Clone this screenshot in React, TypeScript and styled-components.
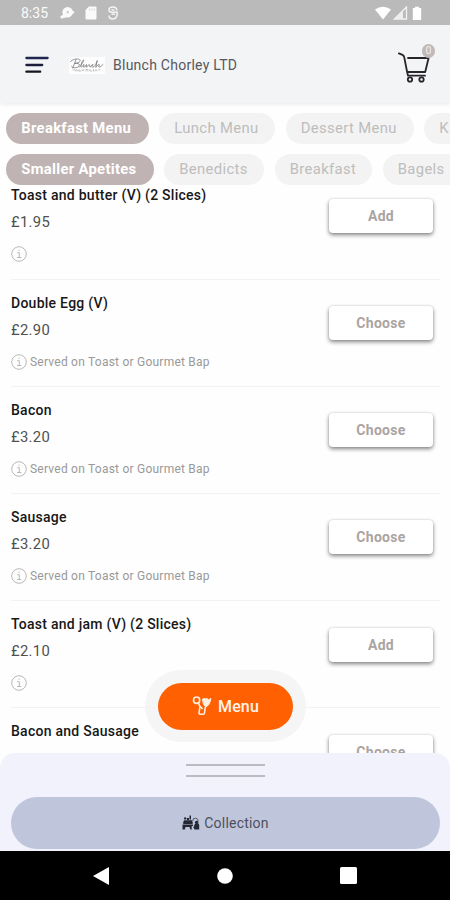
import React from "react";
import styled, { createGlobalStyle } from "styled-components";

const GlobalStyle = createGlobalStyle`
  * { box-sizing: border-box; }
  body { margin: 0; background: #fff; font-family: Roboto, sans-serif; }
  button { font-family: inherit; border: 0; padding: 0; }
`;

const Screen = styled.div`
  width: 450px;
  height: 900px;
  display: flex;
  flex-direction: column;
  overflow: hidden;
  background: #fefefe;
`;

const StatusBar = styled.div`
  flex: 0 0 25px;
  display: flex;
  align-items: center;
  padding: 1px 26px 0 21px;
  background: #bababa;
  color: #fafafa;
`;

const Clock = styled.span`
  width: 39px;
  font-size: 14px;
  line-height: 20px;
`;

const StatusIcons = styled.div<{ $gap: number }>`
  display: flex;
  align-items: center;
  gap: ${(p) => p.$gap}px;
`;

const Spacer = styled.div`
  flex: 1;
`;

const Header = styled.header`
  flex: 0 0 78px;
  display: flex;
  align-items: center;
  padding: 2px 15px 0 25px;
  background: #f3f4f6;
  box-shadow: 0 1px 4px rgba(190, 195, 200, 0.35);
`;

const Logo = styled.div`
  width: 36px;
  height: 17px;
  margin: 0 8px 0 20px;
  background: #fdfdfd;
`;

const BrandName = styled.span`
  font-size: 14px;
  letter-spacing: 0.25px;
  color: #58585c;
`;

const CartButton = styled.div`
  position: relative;
  width: 37px;
  height: 40px;
`;

const CartBadge = styled.span`
  position: absolute;
  top: -1px;
  right: 0;
  width: 13px;
  height: 14px;
  border-radius: 7px;
  background: #c2b9b9;
  color: #f3efef;
  font-size: 10.5px;
  line-height: 14px;
  text-align: center;
`;

const Filters = styled.nav`
  flex: 0 0 82px;
  display: flex;
  flex-direction: column;
  gap: 10.5px;
  padding: 10px 0 0 6px;
  overflow: hidden;
`;

const ChipRow = styled.div`
  display: flex;
  gap: 10.5px;
`;

const Chip = styled.span<{ $active?: boolean; $width: number }>`
  flex: 0 0 ${(p) => p.$width}px;
  height: 30.5px;
  padding-left: 15.3px;
  border-radius: 16px;
  line-height: 30px;
  white-space: nowrap;
  font-size: 14.8px;
  letter-spacing: ${(p) => (p.$active ? 0.3 : 0.35)}px;
  font-weight: ${(p) => (p.$active ? 700 : 400)};
  color: ${(p) => (p.$active ? "#fff" : "#bdbdbd")};
  background: ${(p) => (p.$active ? "#bfb4b3" : "#f3f3f3")};
`;

const List = styled.main`
  flex: 1 1 0;
  min-height: 0;
  overflow: hidden;
  padding: 0 10px 0 11px;
`;

const Items = styled.div`
  margin-top: -12.6px;
`;

const Item = styled.section`
  display: flex;
  justify-content: space-between;
  height: 107.2px;
  padding: 0 7px 0 0;
  border-bottom: 1px solid #f2f2f2;
`;

const Details = styled.div`
  display: flex;
  flex-direction: column;
  padding-top: 13px;
`;

const Title = styled.h2`
  margin: 0;
  font-size: 14px;
  line-height: 20px;
  font-weight: 500;
  letter-spacing: 0.26px;
  color: #171717;
`;

const Price = styled.span`
  height: 20px;
  margin-top: 7px;
  font-size: 14.8px;
  line-height: 20px;
  letter-spacing: 0.35px;
  color: #505050;
`;

const Note = styled.div`
  display: flex;
  align-items: center;
  gap: 3px;
  height: 18px;
  margin-top: 13px;
  font-size: 12px;
  letter-spacing: 0.23px;
  color: #999;
`;

const ActionButton = styled.button`
  width: 104px;
  height: 34px;
  margin-top: 26.5px;
  border-radius: 4px;
  background: #fff;
  color: #aaa4a3;
  font-size: 14px;
  font-weight: 700;
  letter-spacing: 0.3px;
  box-shadow: 0 2px 4px rgba(0, 0, 0, 0.48), 0 0 2px rgba(0, 0, 0, 0.12);
`;

const Sheet = styled.footer`
  position: relative;
  flex: 0 0 98px;
  display: flex;
  flex-direction: column;
  align-items: center;
  padding: 10.5px 10px 0 11px;
  border-radius: 15px 15px 0 0;
  background: #f1f2fb;
`;

const MenuHalo = styled.div`
  position: absolute;
  top: -83px;
  left: 145px;
  padding: 12.5px 13px;
  border-radius: 36px;
  background: rgba(243, 243, 243, 0.85);
`;

const MenuButton = styled.button`
  display: flex;
  align-items: center;
  justify-content: center;
  gap: 6px;
  width: 135px;
  height: 47px;
  border-radius: 24px;
  background: #ff6002;
  color: #fff4ea;
  font-size: 16px;
  font-weight: 500;
  letter-spacing: 0.1px;
`;

const Grip = styled.div`
  width: 79px;
  height: 13px;
  border-top: 2.5px solid #bbbcc1;
  border-bottom: 2.5px solid #bbbcc1;
`;

const CollectionButton = styled.button`
  display: flex;
  align-items: center;
  justify-content: center;
  gap: 4px;
  width: 429px;
  height: 51.5px;
  margin-top: 20.5px;
  border-radius: 26px;
  background: #bfc6dc;
  color: #4d4f5b;
  font-size: 14px;
  letter-spacing: 0.2px;
`;

const NavBar = styled.div`
  flex: 0 0 49px;
  display: flex;
  justify-content: space-between;
  align-items: center;
  padding: 0 93px;
  background: #000;
`;

const BurgerIcon = () => (
  <svg width="24" height="18" viewBox="0 0 24 18" fill="none" strokeWidth="2.3" strokeLinecap="round">
    <path d="M1.4 2H22.6" stroke="#202450" />
    <path d="M1.4 9H17.2" stroke="#1c1e3c" />
    <path d="M1.4 15.7H15.2" stroke="#151520" />
  </svg>
);

const LogoScript = () => (
  <svg width="36" height="17" viewBox="0 0 36 17" fill="none" stroke="#777" strokeWidth="0.8" strokeLinecap="round">
    <path d="M1.5 4.5C3 2.5 8 1.2 10.5 2.5C13 4 9 6.2 6 6.4C10 6 12 7.8 9 10C7 11.4 3.5 11 2.5 9.5M7 2.7L3.7 11M10.5 10C12 8 14.6 5 14.8 3.2C14 2 12 7 11.8 9.8C13 11 14 8 15 7.3L14.6 10C16 10.3 17 8.5 17.5 7.5L17 10.2C18 10.5 19 8 20.2 7.4C21.5 7.5 19.8 10 21 10.1C22 10 22.2 8 24.3 7.5C23 7 22 10.5 24 10.2C26 9.8 27.5 6 28.2 3.5L26.8 10.4C28 8.6 29.3 7 30.2 7.5L29.8 10C31 10.5 32.5 9 34 7.5" />
    <path d="M4 13H6M7 14V12.5L9 14M10 12.5V14H12M13 12.5L14 14L15 12.5M17 14V12.5H19V14M21 12.5V14H23M24.5 12.5V14M26 14L27 12.5L28 14M29.5 12.8H31" stroke="#aaa" strokeWidth=".7" />
  </svg>
);

const CartIcon = () => (
  <svg width="34" height="40" viewBox="0 -6.5 34 40" fill="none" stroke="#29252b" strokeWidth="1.8" strokeLinecap="round" strokeLinejoin="round">
    <path d="M.9 1.9L4.5 3.4Q6 4.1 6.3 6L9.3 21.5M10 6.5H30.6L27.2 20.5H9.2L10 24.2H27" />
    <circle cx="12" cy="28" r="2.2" />
    <circle cx="23.5" cy="28" r="2.2" />
  </svg>
);

const InfoIcon = () => (
  <svg width="16" height="16" viewBox="0 0 16 16" fill="none" stroke="#b8b8b8">
    <circle cx="8" cy="8" r="7.3" />
    <path d="M6.2 6.7H8.3V11.4M6 11.5H10.3M7.5 4.2H8.7" />
  </svg>
);

const CutleryIcon = () => (
  <svg width="20" height="20" viewBox="0 0 20 20" fill="none" stroke="#fff0e0" strokeWidth="1.6" strokeLinecap="round" strokeLinejoin="round">
    <ellipse cx="4.6" cy="4.2" rx="3.1" ry="3.2" />
    <path d="M6.3 7L8 10.3L7 17Q7.2 18.4 8.5 18.2H11Q12.3 18.3 12.5 17L13.3 11M8 10.3L10.2 12.5" />
    <path d="M10.8 3L13.2 2.4L13.8 4.2L14.8 2.2L16.4 4L18.9 2.4L18 6Q17 9.5 14 11L11.7 8.5Z" fill="#fff0e0" strokeWidth="1" />
  </svg>
);

const CollectionIcon = () => (
  <svg width="18" height="16" viewBox="0 0 18 16" fill="#252735">
    <circle cx="3.2" cy="3.4" r="1.2" />
    <path d="M5 3H7V5H5ZM7.5 .5H9V4.5H7.5ZM2 5.3H10L11 8.5L9.5 9H2.5L.8 8.5Z" />
    <path d="M.5 9.5H11V11H9.7V14.5H8.3L7.5 12H3.5L2.8 14.5H.5Z" />
    <path d="M10.8 6Q10.5 3 13.5 3.2Q16.5 3.5 16.2 6.5" fill="none" stroke="#4a4c5b" strokeWidth=".9" />
    <circle cx="14.6" cy="7.4" r="1.7" />
    <path d="M12.5 9.5L14 8.5H16.5L17.2 10V14.5H12.5L11.5 12.5Z" />
  </svg>
);

const SERVED = "Served on Toast or Gourmet Bap";

const ITEMS = [
  { name: "Toast and butter (V) (2 Slices)", price: "£1.95", note: "", action: "Add" },
  { name: "Double Egg (V)", price: "£2.90", note: SERVED, action: "Choose" },
  { name: "Bacon", price: "£3.20", note: SERVED, action: "Choose" },
  { name: "Sausage", price: "£3.20", note: SERVED, action: "Choose" },
  { name: "Toast and jam (V) (2 Slices)", price: "£2.10", note: "", action: "Add" },
  { name: "Bacon and Sausage", price: "", note: "", action: "Choose" },
];

export default function App() {
  return (
    <Screen>
      <GlobalStyle />
      <StatusBar>
        <Clock>8:35</Clock>
        <StatusIcons $gap={9.5}>
          <svg width="15" height="14" viewBox="0 0 15 14" fill="#fafafa">
            <circle cx="7.6" cy="6.2" r="5.2" />
            <path d="M11 3.5L14.8 6.3L11 9ZM4.5 8L.3 10.2L1 12.8L6.5 11.3Z" />
            <circle cx="7.8" cy="6.2" r="1.2" fill="#cfcfcf" />
          </svg>
          <svg width="12" height="14" viewBox="0 0 12 14" fill="#fafafa">
            <path d="M4 .5H10.5Q11.5.5 11.5 1.5V12.5Q11.5 13.5 10.5 13.5H1.5Q.5 13.5.5 12.5V4Z" />
            <path d="M4.5 2.5V4.5M7 2.5V4.5M9.3 2.5V4.5" stroke="#d7d7d7" />
          </svg>
          <svg width="14" height="14" viewBox="0 0 14 14" fill="none" stroke="#f4f4f4" strokeWidth="1.5">
            <path d="M11 4.5Q10.5 1 7 1Q3 1 3 4Q3 6 5.5 6.3H11.3Q11.3 13 7 13Q3 13 3 9.5M5.5 8.3H9M5.5 4H8.5" />
          </svg>
        </StatusIcons>
        <Spacer />
        <StatusIcons $gap={2}>
          <svg width="16" height="14" viewBox="0 0 16 14" fill="#fff">
            <path d="M0 3.5Q8-2 16 3.5L8 13.5Z" />
          </svg>
          <svg width="15" height="14" viewBox="0 0 15 14">
            <path d="M13.5 1V13H1.5Z" fill="none" stroke="#f2f2f2" strokeWidth="1.3" />
            <path d="M10 4.5V13H1.5Z" fill="#eee" />
          </svg>
          <svg width="14" height="15" viewBox="0 0 14 15" fill="#fff">
            <path d="M5 0.8H9V2H11.2V14H2.8V2H5Z" />
          </svg>
        </StatusIcons>
      </StatusBar>

      <Header>
        <BurgerIcon />
        <Logo><LogoScript /></Logo>
        <BrandName>Blunch Chorley LTD</BrandName>
        <Spacer />
        <CartButton>
          <CartIcon />
          <CartBadge>0</CartBadge>
        </CartButton>
      </Header>

      <Filters>
        <ChipRow>
          <Chip $active $width={142.5}>Breakfast Menu</Chip>
          <Chip $width={116}>Lunch Menu</Chip>
          <Chip $width={128}>Dessert Menu</Chip>
          <Chip $width={60}>K</Chip>
        </ChipRow>
        <ChipRow>
          <Chip $active $width={147.5}>Smaller Apetites</Chip>
          <Chip $width={100}>Benedicts</Chip>
          <Chip $width={97.5}>Breakfast</Chip>
          <Chip $width={79}>Bagels</Chip>
        </ChipRow>
      </Filters>

      <List>
        <Items>
          {ITEMS.map((item) => (
            <Item key={item.name}>
              <Details>
                <Title>{item.name}</Title>
                <Price>{item.price}</Price>
                <Note><InfoIcon />{item.note}</Note>
              </Details>
              <ActionButton>{item.action}</ActionButton>
            </Item>
          ))}
        </Items>
      </List>

      <Sheet>
        <MenuHalo>
          <MenuButton><CutleryIcon />Menu</MenuButton>
        </MenuHalo>
        <Grip />
        <CollectionButton><CollectionIcon />Collection</CollectionButton>
      </Sheet>

      <NavBar>
        <svg width="17" height="18" viewBox="0 0 17 18" fill="#fff"><path d="M0 9L16 0V18Z" /></svg>
        <svg width="16" height="16" viewBox="0 0 16 16" fill="#fff"><circle cx="8" cy="8" r="7.8" /></svg>
        <svg width="17" height="17" viewBox="0 0 17 17" fill="#fff"><rect width="17" height="17" rx="1.5" /></svg>
      </NavBar>
    </Screen>
  );
}
